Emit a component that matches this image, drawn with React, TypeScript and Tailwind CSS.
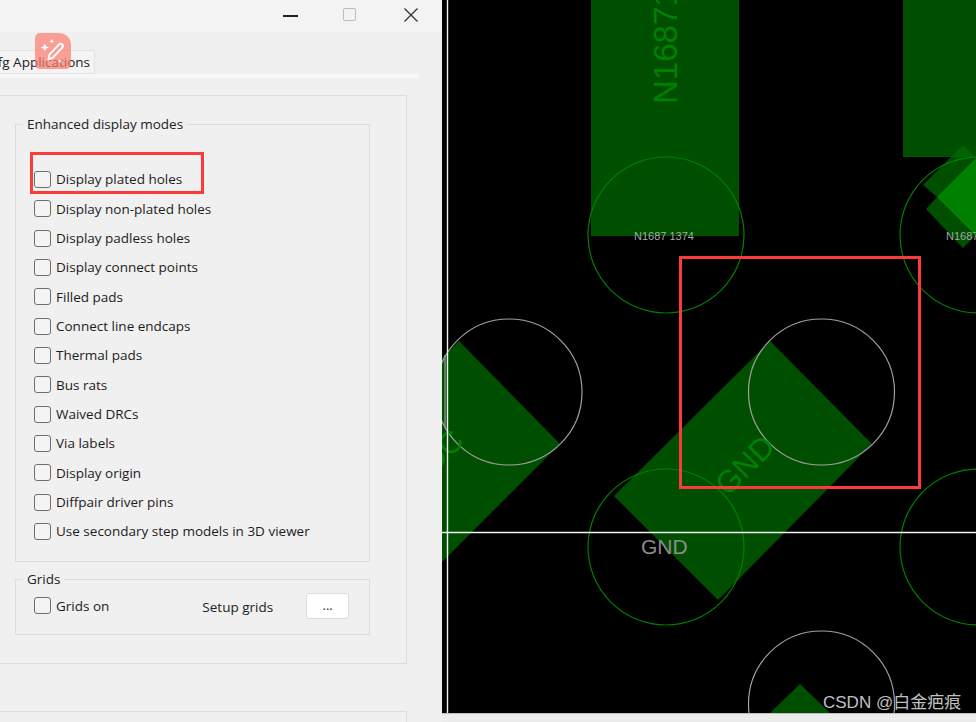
const modes = [
  "Display plated holes",
  "Display non-plated holes",
  "Display padless holes",
  "Display connect points",
  "Filled pads",
  "Connect line endcaps",
  "Thermal pads",
  "Bus rats",
  "Waived DRCs",
  "Via labels",
  "Display origin",
  "Diffpair driver pins",
  "Use secondary step models in 3D viewer",
];

const CheckRow = ({ label }: { label: string }) => (
  <label className="flex items-center h-[29.33px] gap-[5px]">
    <span className="w-[17px] h-[17px] rounded-[3px] border border-[#6e6e6e] bg-[#f4f4f4] shrink-0" />
    <span className="text-[13.5px] text-[#1c1c1c] leading-none mt-[1px]">{label}</span>
  </label>
);

const Canvas = () => (
  <svg viewBox="442 0 534 713" className="w-[534px] h-[713px] block bg-black">
    <rect x="591" y="0" width="148" height="236" fill="#004f00" />
    <rect x="903" y="0" width="73" height="157" fill="#004f00" />
    <polygon points="963,145 976,158 976,235 963,248 926,209 937,197 923,185" fill="#004f00" />
    <polygon points="951,157 963,145 975,157" fill="#006400" />
    <polygon points="937,197 976,158 976,236" fill="#008000" />
    <polygon points="770,341 872,444 718,600 614,496" fill="#004f00" />
    <polygon points="459,341 560,444 442,562 442,358" fill="#004f00" />
    <polygon points="800,684 830,713 770,713" fill="#004f00" />

    <g fill="none" strokeWidth="1.2">
      <circle cx="666" cy="235" r="78" stroke="#008000" />
      <circle cx="978" cy="235" r="78" stroke="#008000" />
      <circle cx="666" cy="547" r="78" stroke="#008000" />
      <circle cx="978" cy="547" r="78" stroke="#008000" />
      <circle cx="509" cy="392" r="73" stroke="#a0a0a0" />
      <circle cx="821.5" cy="392" r="73" stroke="#a0a0a0" />
      <circle cx="821.5" cy="704" r="73" stroke="#a0a0a0" />
    </g>

    <g fontFamily="'Liberation Sans', sans-serif">
      <text
        transform="translate(677 104) rotate(-90)"
        fontSize="33"
        fill="#008000"
      >
        N16871374
      </text>
      <text
        transform="translate(728 497) rotate(-45)"
        fontSize="31"
        fill="#008000"
      >
        GND
      </text>
      <text
        transform="translate(434 474) rotate(-45)"
        fontSize="31"
        fill="#008000"
      >
        DC
      </text>
      <text x="634" y="240" fontSize="11" fill="#a8a8a8">
        N1687 1374
      </text>
      <text x="946" y="240" fontSize="11" fill="#a8a8a8">
        N1687
      </text>
      <text x="641" y="554" fontSize="21" fill="#8c8c8c">
        GND
      </text>
    </g>

    <line x1="442" y1="532.5" x2="976" y2="532.5" stroke="#f4f0f4" strokeWidth="1.4" />
    <line x1="447.5" y1="0" x2="447.5" y2="713" stroke="#f4f0f4" strokeWidth="1.4" />
    <line x1="445" y1="355" x2="445" y2="428" stroke="#a0a0a0" strokeWidth="1.2" />
  </svg>
);

export default function App() {
  return (
    <div
      className="relative w-[976px] h-[722px] overflow-hidden flex bg-[#f0f0f0]"
      style={{ fontFamily: "'Open Sans', 'Noto Sans', sans-serif" }}
    >
      {/* dialog */}
      <div className="w-[442px] h-full shrink-0">
        <div className="h-[32px] bg-[#f3f3f3] flex items-center justify-end relative">
          <span className="w-[15px] h-[1.5px] bg-[#222] absolute left-[283px] top-[15px]" />
          <span className="w-[13px] h-[13px] border border-[#bbb] rounded-[2px] absolute left-[343px] top-[8px]" />
          <svg viewBox="0 0 16 16" className="w-[16px] h-[16px] absolute left-[403px] top-[7px]">
            <path d="M1.5 1.5 14.5 14.5M14.5 1.5 1.5 14.5" stroke="#333" strokeWidth="1.3" />
          </svg>
        </div>
        <div className="h-[18px]" />
        <div className="w-[95px] h-[24px] bg-[#f4f4f4] border border-[#e2e2e2] border-l-0 rounded-tr-[2px] overflow-hidden flex items-center justify-end pr-[4px]">
          <span className="text-[13.5px] text-[#222] whitespace-nowrap">fg Applications</span>
        </div>
        <div className="w-[419px] h-[4px] bg-[#f8f8f8]" />
        <div className="h-[17px]" />

        <div className="w-[407px] h-[569px] border border-l-0 border-[#dcdcdc] pt-[28px] pl-[15px]">
          <fieldset className="w-[355px] h-[438px] border border-[#dcdcdc] relative pl-[18px] pt-[40px]">
            <span className="absolute left-[7px] top-[-7px] px-[4px] bg-[#f0f0f0] text-[13.5px] text-[#222] leading-none">
              Enhanced display modes
            </span>
            {modes.map((m) => (
              <CheckRow key={m} label={m} />
            ))}
          </fieldset>

          <fieldset className="mt-[17px] w-[355px] h-[56px] border border-[#dcdcdc] relative pl-[18px] pb-[2px] flex items-center">
            <span className="absolute left-[7px] top-[-7px] px-[4px] bg-[#f0f0f0] text-[13.5px] text-[#222] leading-none">
              Grids
            </span>
            <div className="flex items-center w-full">
              <CheckRow label="Grids on" />
              <span className="ml-[93px] text-[13.5px] text-[#222] mt-[2px]">Setup grids</span>
              <button className="ml-[33px] w-[43px] h-[26px] bg-white border border-[#dadada] rounded-[3px] text-[13px] text-[#333] leading-none">
                ...
              </button>
            </div>
          </fieldset>
        </div>

        <div className="mt-[47px] w-[407px] h-[20px] border-t border-r border-[#dcdcdc]" />
      </div>

      {/* pcb view */}
      <div className="flex-1 flex flex-col">
        <Canvas />
        <div className="flex-1 bg-[#ececec] border-t border-[#bdbdbd]" />
      </div>

      {/* annotation marks */}
      <div className="absolute left-[30px] top-[152px] w-[174px] h-[42px] border-[3px] border-[#fb3a3a]" />
      <div className="absolute left-[679px] top-[256px] w-[242px] h-[233px] border-[3px] border-[#fb3a3a]" />
      <span
        className="absolute left-[823px] top-[691px] text-[17px] leading-[24px] text-[#c0c0c0] whitespace-nowrap"
        style={{ fontFamily: "'Liberation Sans', 'Noto Sans CJK SC', sans-serif" }}
      >
        CSDN @白金疤痕
      </span>

      {/* floating assistant button */}
      <div className="absolute left-[35px] top-[33px] w-[36px] h-[36px] rounded-tl-[5px] rounded-tr-[12px] rounded-b-[5px] bg-[#fb7a6c]/70 flex items-center justify-center">
        <svg viewBox="0 0 24 24" className="w-[28px] h-[28px]" fill="none" stroke="#fff" strokeWidth="1.6">
          <path d="M8 19.5 9 15 17 6.5a1.8 1.8 0 0 1 3 2.5L12 17.5Z" strokeLinejoin="round" />
          <path d="M5 5.5 6 8l2.5 1L6 10l-1 2.500L4 10 1.500 9 4 8Z" fill="#fff" stroke="none" />
          <path d="M11 1.500l.6 1.600 1.600.6-1.600.6-.6 1.600-.6-1.600-1.600-.6 1.600-.6Z" fill="#fff" stroke="none" />
          <path d="M18 18.500l.5 1.500 1.500.5-1.500.5-.5 1.500-.5-1.500-1.500-.5 1.500-.5Z" fill="#fff" stroke="none" />
        </svg>
      </div>
    </div>
  );
}
